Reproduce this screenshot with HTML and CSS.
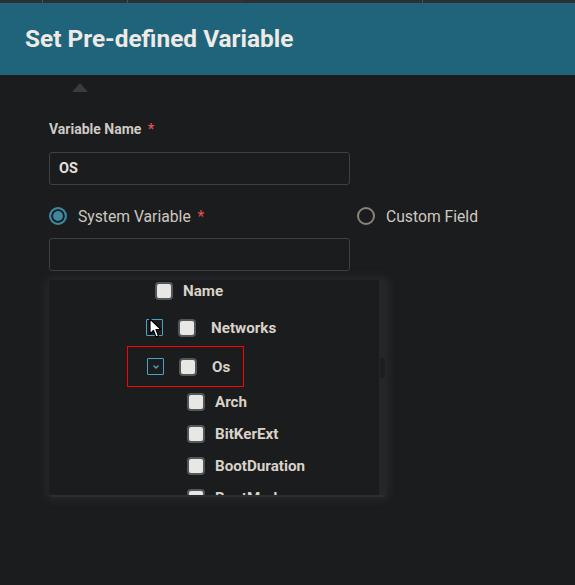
FILE: index.html
```html
<!DOCTYPE html>
<html>
<head>
<meta charset="utf-8">
<link rel="stylesheet" href="styles.css">
</head>
<body>
<div class="topstrip"><span class="seg a"></span><span class="seg b"></span><span class="seg c"></span><span class="seg d"></span></div>
<header class="header"><h1 class="title">Set Pre-defined Variable</h1></header>
<main class="content">
  <div class="caret"></div>
  <label class="field-label">Variable Name <span class="req">*</span></label>
  <div class="input"><span class="input-text">OS</span></div>
  <div class="radio-row">
    <div class="radio-opt sys"><span class="radio checked"></span><span class="radio-label">System Variable <span class="req">*</span></span></div>
    <div class="radio-opt"><span class="radio"></span><span class="radio-label">Custom Field</span></div>
  </div>
  <div class="input input2"></div>
  <div class="panel">
    <div class="tree">
      <div class="row r-name"><span class="cb"></span><span class="lbl">Name</span></div>
      <div class="row r-net"><span class="exp"><svg width="10" height="10" viewBox="0 0 10 10"><path d="M3 2 L7 5 L3 8" fill="none" stroke="#4aa3c4" stroke-width="1.4"/></svg></span><span class="cb"></span><span class="lbl">Networks</span>
        <svg class="cursor" width="14" height="21" viewBox="0 0 14 21"><path d="M1 1 L1 16 L4.5 12.5 L7 19 L9.5 18 L7 11.5 L12 11.5 Z" fill="#fff" stroke="#000" stroke-width="1.2" stroke-linejoin="round"/></svg>
      </div>
      <div class="row r-os"><span class="exp"><svg width="10" height="10" viewBox="0 0 10 10"><path d="M2.5 3.5 L5 6 L7.5 3.5" fill="none" stroke="#4aa3c4" stroke-width="1.4"/></svg></span><span class="cb"></span><span class="lbl">Os</span></div>
      <div class="row child"><span class="cb"></span><span class="lbl">Arch</span></div>
      <div class="row child"><span class="cb"></span><span class="lbl">BitKerExt</span></div>
      <div class="row child"><span class="cb"></span><span class="lbl">BootDuration</span></div>
      <div class="row child"><span class="cb"></span><span class="lbl">BootMode</span></div>
    </div>
    <div class="scroll"><div class="thumb"></div></div>
  </div>
</main>
</body>
</html>
```
FILE: styles.css
```css
* { box-sizing: border-box; }
html, body { margin: 0; padding: 0; }
body {
  width: 575px;
  height: 585px;
  overflow: hidden;
  background: #1b1c1e;
  font-family: Roboto, "Liberation Sans", sans-serif;
  color: #d6d1c9;
}
.topstrip {
  height: 3px;
  background: #2c2f33;
  display: flex;
}
.topstrip .seg { height: 3px; display: block; }
.topstrip .a { margin-left: 42px; width: 1px; background: #4a5056; }
.topstrip .b { margin-left: 84px; width: 1px; background: #4a5056; }
.topstrip .c { margin-left: 32px; width: 82px; background: #3a2f30; }
.topstrip .d { margin-left: 180px; width: 1px; background: #4a5056; }
.header {
  height: 72px;
  background: #20647c;
  display: flex;
  align-items: center;
  padding-left: 25px;
}
.title {
  margin: 0;
  font-size: 24.4px;
  font-weight: 700;
  color: #eeeae5;
  position: relative;
  top: -1px;
}
.content {
  padding-left: 49px;
  padding-top: 8px;
}
.caret {
  width: 0; height: 0;
  margin-left: 23px;
  border-left: 8px solid transparent;
  border-right: 8px solid transparent;
  border-bottom: 9px solid #3a3c3f;
}
.field-label {
  display: block;
  margin-top: 29px;
  font-size: 14px;
  font-weight: 700;
  color: #cfcac3;
  line-height: 16px;
}
.req { color: #e05252; margin-left: 3px; }
.input {
  margin-top: 15px;
  width: 301px;
  height: 33px;
  border: 1px solid #3e4043;
  border-radius: 3px;
  display: flex;
  align-items: center;
  padding-left: 9px;
}
.input-text { font-size: 14.5px; font-weight: 700; color: #e4e0da; }
.radio-row {
  margin-top: 21px;
  height: 20px;
  display: flex;
  align-items: center;
}
.radio-opt { display: flex; align-items: center; }
.radio-opt.sys { width: 308px; }
.radio {
  width: 18px; height: 18px;
  border-radius: 50%;
  border: 2px solid #8a8378;
  display: inline-block;
}
.radio.checked {
  border-color: #3d87a0;
  background: #3d87a0;
  box-shadow: inset 0 0 0 2px #1b1c1e;
}
.radio-label { margin-left: 11px; font-size: 15.7px; color: #cdc8c0; }
.input2 { margin-top: 12px; height: 33px; }
.panel {
  margin-top: 9px;
  width: 337px;
  height: 217px;
  display: flex;
  background: #1b1c1e;
  border-bottom: 2px solid #2a2e31;
  border-radius: 3px;
  box-shadow: 0 0 8px 3px rgba(60,64,68,0.35);
  overflow: hidden;
}
.tree { width: 330px; height: 215px; overflow: hidden; }
.scroll { width: 7px; background: #23272a; position: relative; }
.thumb { position: absolute; left: 1px; top: 78px; width: 5px; height: 20px; background: #1c1f21; border-radius: 2px; }
.row {
  display: flex;
  align-items: center;
  font-size: 15.2px;
  font-weight: 700;
  color: #d8d2c8;
}
.cb {
  width: 18px; height: 18px;
  background: #e9e7e3;
  border: 2px solid #52575c;
  border-radius: 4px;
  flex: none;
}
.r-name { height: 22px; padding-left: 106px; }
.r-name .lbl { margin-left: 10px; }
.r-net { height: 37px; margin-top: 7px; padding-left: 97px; position: relative; }
.r-os {
  height: 41px;
  margin-left: 78px;
  width: 117px;
  padding-left: 19px;
  border: 1px solid #ff0000;
}
.exp {
  width: 17px; height: 17px;
  border: 1px solid #4aa3c4;
  border-radius: 1px;
  display: flex; align-items: center; justify-content: center;
  flex: none;
}
.r-net .cb, .r-os .cb { margin-left: 15px; }
.r-net .lbl, .r-os .lbl { margin-left: 15px; }
.cursor { position: absolute; left: 100px; top: 9px; }
.child { height: 32px; padding-left: 138px; margin-top: 0; }
.r-os + .child { margin-top: -1px; }
.child .lbl { margin-left: 10px; }
```
